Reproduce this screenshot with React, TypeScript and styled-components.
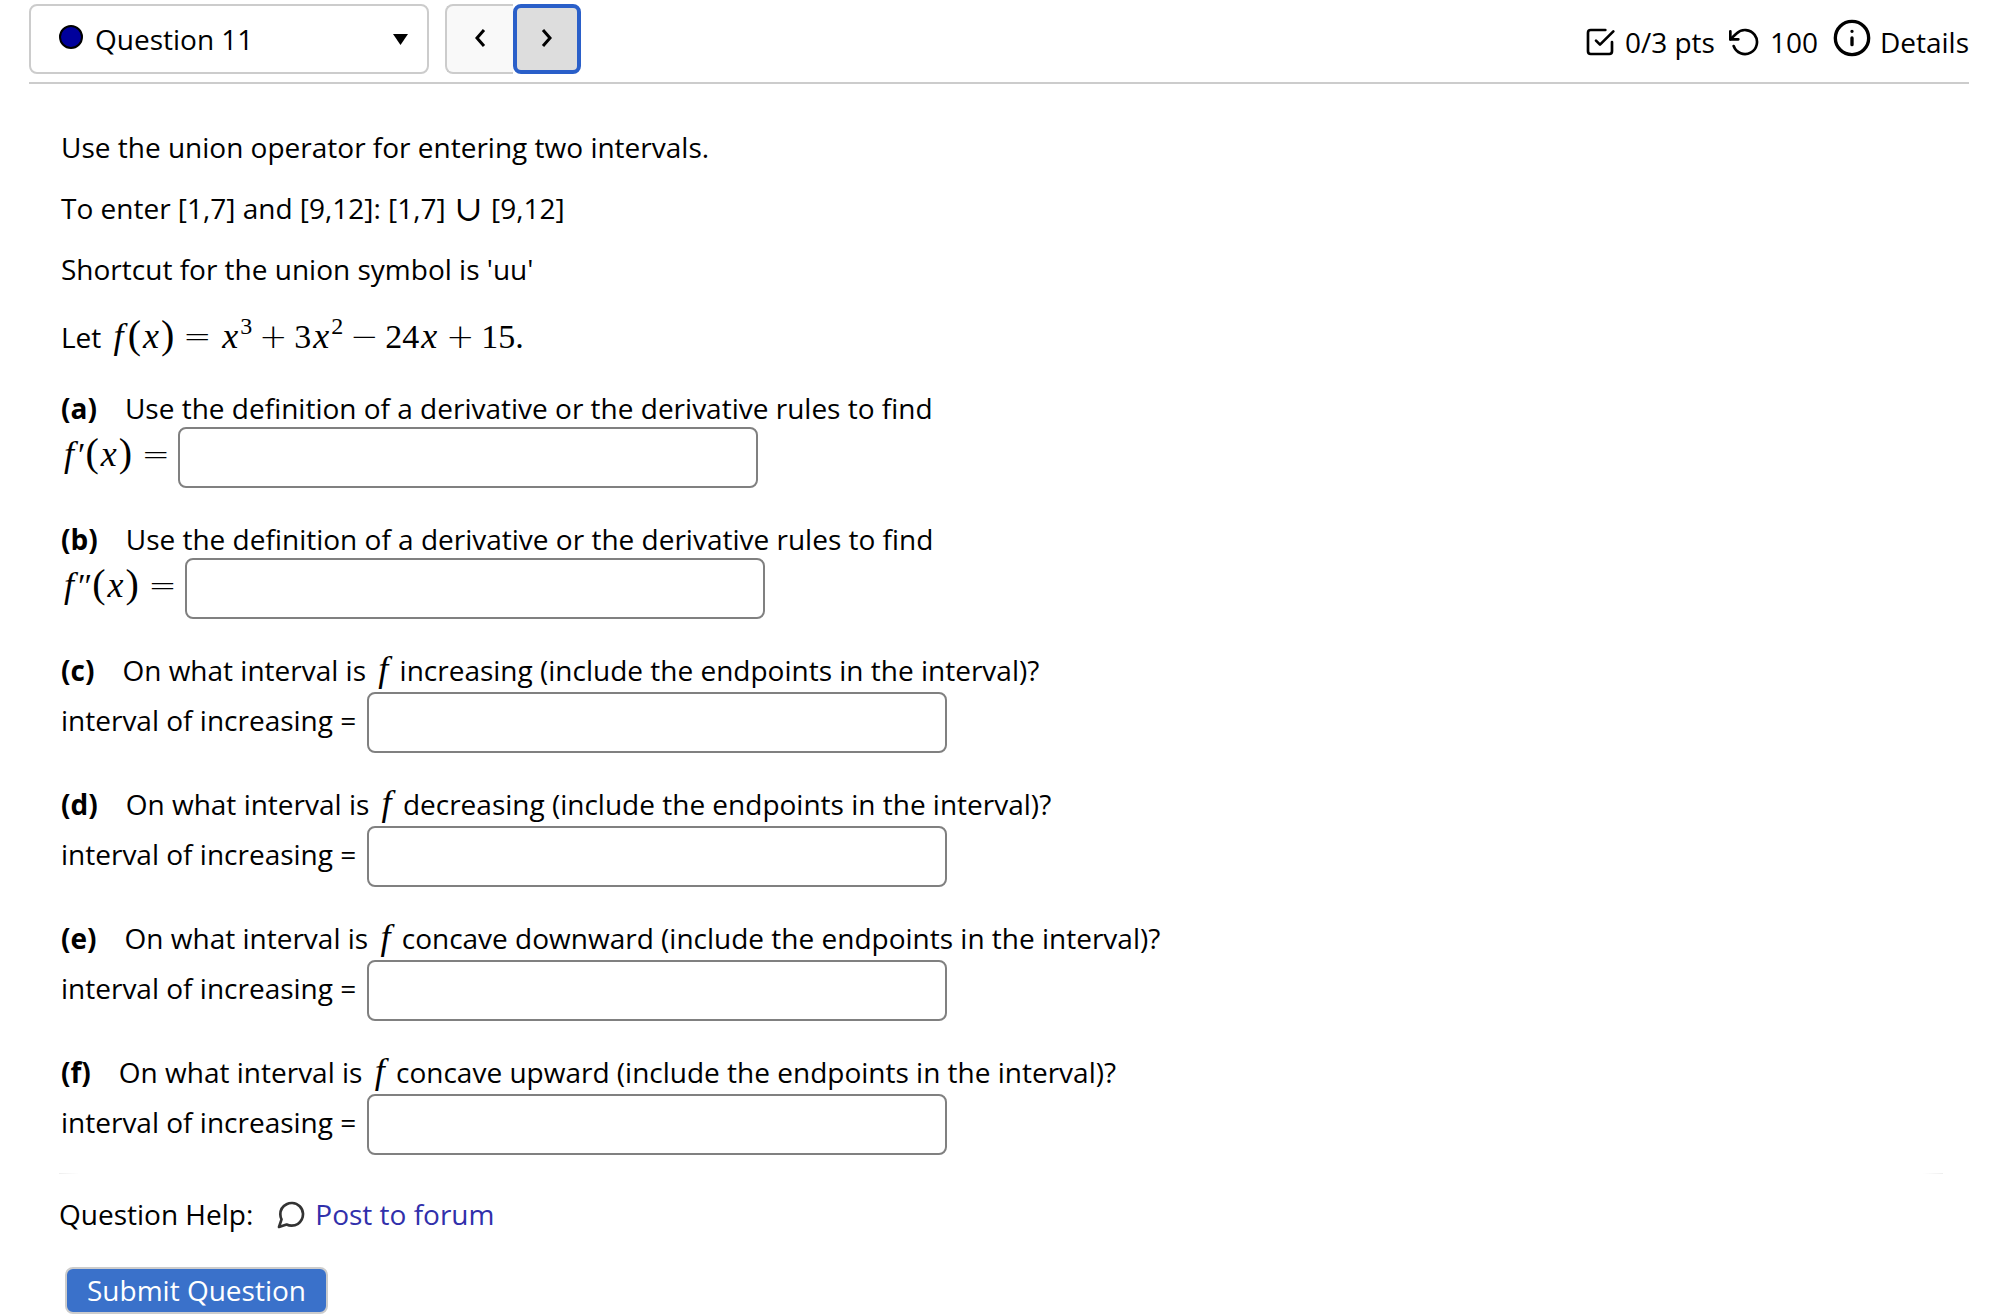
import React from 'react';
import styled, { createGlobalStyle } from 'styled-components';

const GlobalStyle = createGlobalStyle`
  *, *::before, *::after { box-sizing: border-box; }
  body {
    margin: 0;
    background: #fff;
    color: #000;
    font: 28px/33px "Open Sans", "Noto Sans", sans-serif;
  }
  button, input, select { font: inherit; color: inherit; }
`;

const Page = styled.div`
  padding: 4px 21px 0 29px;
`;

const Header = styled.header`
  display: flex;
  align-items: flex-end;
  justify-content: space-between;
  padding-bottom: 8px;
  border-bottom: 2px solid #ccc;
`;

const Navigation = styled.nav`
  display: flex;
  align-items: stretch;
  height: 70px;
`;

const QuestionPicker = styled.div`
  display: flex;
  align-items: center;
  gap: 12px;
  width: 400px;
  margin-right: 16px;
  padding: 0 19px 0 28px;
  border: 2px solid #ccc;
  border-radius: 8px;
`;

const Dot = styled.svg`
  margin-bottom: 4px;
`;

const QuestionSelect = styled.select`
  flex: 1;
  min-width: 0;
  height: 40px;
  padding: 0;
  border: 0;
  background: none;
  appearance: none;
  outline: none;
`;

const StepButton = styled.button<{ $current?: boolean }>`
  display: flex;
  align-items: center;
  justify-content: center;
  width: 68px;
  padding: 0;
  border: ${p => (p.$current ? '4px solid #2a5fc9' : '2px solid #ccc')};
  border-right-width: ${p => (p.$current ? '4px' : '0')};
  border-radius: ${p => (p.$current ? '8px' : '8px 0 0 8px')};
  background: ${p => (p.$current ? '#ddd' : '#f9f9f9')};
`;

const Status = styled.div`
  display: flex;
  align-items: center;
  gap: 14px;
  padding-bottom: 8px;
`;

const StatusItem = styled.span`
  display: flex;
  align-items: center;
  gap: 9px;
`;

const DetailsButton = styled.button`
  display: flex;
  align-items: center;
  gap: 8px;
  padding: 0;
  border: 0;
  background: none;
`;

const InfoIcon = styled.svg`
  margin-bottom: 8px;
`;

const Question = styled.main`
  padding: 47px 32px 0;
`;

const Line = styled.p<{ $height?: number }>`
  margin: 0 0 28px;
  line-height: ${p => p.$height ?? 33}px;
`;

const Parts = styled.div`
  display: flex;
  flex-direction: column;
  gap: 35px;
  margin-top: 32px;
`;

const Prompt = styled.div<{ $tall?: boolean }>`
  min-height: ${p => (p.$tall ? 36 : 33)}px;
  margin-bottom: 2px;
`;

const PartName = styled.b`
  margin-right: 28px;
`;

const AnswerRow = styled.div`
  display: flex;
  align-items: center;
  gap: 8px;
`;

const AnswerLabel = styled.label<{ $words?: boolean }>`
  padding: 0 ${p => (p.$words ? 3 : 0)}px 4px 0;
  white-space: nowrap;
`;

const AnswerInput = styled.input`
  width: 580px;
  height: 61px;
  padding: 0 12px;
  border: 2px solid #808080;
  border-radius: 8px;
  background: #fff;
`;

const MathText = styled.span<{ $inline?: boolean }>`
  margin-left: ${p => (p.$inline ? 2 : 0)}px;
  font-family: "Liberation Serif", "Times New Roman", serif;
  font-size: 34px;
  line-height: 0;
  white-space: nowrap;
`;

const Fn = styled.i`
  margin: 0 4px 0 3px;
  font-size: 36px;
`;

const Var = styled.i`
  margin: 0 2px;
  font-size: 36px;
`;

const Paren = styled.span`
  font-size: 40px;
`;

const Operator = styled.span`
  display: inline-block;
  width: 42px;
  font-family: "DejaVu Sans", sans-serif;
  font-weight: 200;
  text-align: center;
`;

const Relation = styled(Operator)<{ $last?: boolean }>`
  width: ${p => (p.$last ? 38 : 46)}px;
  text-align: ${p => (p.$last ? 'right' : 'center')};
`;

const Power = styled.sup`
  font-size: 24px;
  line-height: 0;
  vertical-align: 14px;
`;

const Union = styled.span`
  margin: 0 2px;
  font-family: "DejaVu Math TeX Gyre", "DejaVu Sans", sans-serif;
  font-size: 34px;
  line-height: 0;
`;

const Divider = styled.hr`
  height: 1px;
  margin: 18px 26px 0 30px;
  border: 0;
  background: linear-gradient(to right, #eee, #fff 20px, #fff calc(100% - 20px), #eee);
`;

const Footer = styled.footer`
  padding: 24px 30px 0;
`;

const Help = styled.div`
  display: flex;
  align-items: center;
  gap: 22px;
  margin-bottom: 36px;
`;

const ForumLink = styled.a`
  display: flex;
  align-items: center;
  gap: 8px;
  color: #3130ab;
  text-decoration: none;
`;

const SubmitButton = styled.button`
  height: 47px;
  margin-left: 6px;
  padding: 0 20px;
  border: 2px solid #ccc;
  border-radius: 8px;
  background: #3a71ca;
  color: #fff;
  line-height: 33px;
`;

const stroke = {
  fill: 'none',
  stroke: 'currentColor',
  strokeWidth: 2,
  strokeLinecap: 'round',
  strokeLinejoin: 'round',
} as const;

const OfX = () => (
  <>
    <Paren>(</Paren>
    <Var>x</Var>
    <Paren>)</Paren>
  </>
);

const F = () => (
  <MathText $inline>
    <Fn>f</Fn>
  </MathText>
);

const derivative = (prime: string) => (
  <MathText>
    <Fn>f</Fn>
    {prime}
    <OfX />
    <Relation $last>=</Relation>
  </MathText>
);

const rules = 'Use the definition of a derivative or the derivative rules to find';

const intervalPrompt = (kind: string) => (
  <>
    On what interval is <F /> {kind} (include the endpoints in the interval)?
  </>
);

const intervalLabel = 'interval of increasing =';

const parts = [
  { id: 'a', prompt: rules, label: derivative('′') },
  { id: 'b', prompt: rules, label: derivative('″') },
  { id: 'c', words: true, prompt: intervalPrompt('increasing'), label: intervalLabel },
  { id: 'd', words: true, prompt: intervalPrompt('decreasing'), label: intervalLabel },
  { id: 'e', words: true, prompt: intervalPrompt('concave downward'), label: intervalLabel },
  { id: 'f', words: true, prompt: intervalPrompt('concave upward'), label: intervalLabel },
];

export default function App() {
  return (
    <>
      <GlobalStyle />
      <Page>
        <Header>
          <Navigation>
            <QuestionPicker>
              <Dot width="24" height="24" viewBox="0 0 24 24" aria-hidden="true">
                <circle cx="12" cy="12" r="11" fill="#00009c" stroke="#000" strokeWidth="2" />
              </Dot>
              <QuestionSelect aria-label="Question">
                <option>Question 11</option>
              </QuestionSelect>
              <svg width="15" height="11" viewBox="0 0 15 11" aria-hidden="true">
                <path d="M0 0h15L7.500 11z" />
              </svg>
            </QuestionPicker>
            <StepButton aria-label="Previous question">
              <svg width="12" height="20" viewBox="0 0 12 20" aria-hidden="true">
                <path d="M10 1 3 9l7 8" {...stroke} strokeWidth={3} strokeLinecap="butt" strokeLinejoin="miter" />
              </svg>
            </StepButton>
            <StepButton $current aria-label="Next question">
              <svg width="12" height="20" viewBox="0 0 12 20" aria-hidden="true">
                <path d="m2 1 7 8-7 8" {...stroke} strokeWidth={3} strokeLinecap="butt" strokeLinejoin="miter" />
              </svg>
            </StepButton>
          </Navigation>
          <Status>
            <StatusItem>
              <svg width="32" height="32" viewBox="0 0 24 24" aria-hidden="true" {...stroke}>
                <path d="m9 11 3 3L22 4" />
                <path d="M21 12v7a2 2 0 0 1-2 2H5a2 2 0 0 1-2-2V5a2 2 0 0 1 2-2h11" />
              </svg>
              0/3 pts
            </StatusItem>
            <StatusItem>
              <svg width="32" height="32" viewBox="0 0 24 24" aria-hidden="true" {...stroke}>
                <path d="M1 4v6h6" />
                <path d="M3.51 15a9 9 0 1 0 2.13-9.36L1 10" />
              </svg>
              100
            </StatusItem>
            <DetailsButton>
              <InfoIcon width="40" height="40" viewBox="0 0 24 24" aria-hidden="true" {...stroke}>
                <circle cx="12" cy="12" r="10" />
                <path d="M12 16v-4M12 8h.01" />
              </InfoIcon>
              Details
            </DetailsButton>
          </Status>
        </Header>

        <Question>
          <Line>Use the union operator for entering two intervals.</Line>
          <Line>
            To enter [1,7] and [9,12]: [1,7] <Union>∪</Union> [9,12]
          </Line>
          <Line>Shortcut for the union symbol is 'uu'</Line>
          <Line $height={46}>
            Let{' '}
            <MathText $inline>
              <Fn>f</Fn>
              <OfX />
              <Relation>=</Relation>
              <Var>x</Var>
              <Power>3</Power>
              <Operator>+</Operator>3<Var>x</Var>
              <Power>2</Power>
              <Operator>−</Operator>24<Var>x</Var>
              <Operator>+</Operator>15.
            </MathText>
          </Line>
          <Parts>
            {parts.map(part => (
              <section key={part.id}>
                <Prompt $tall={part.words}>
                  <PartName>({part.id})</PartName>
                  {part.prompt}
                </Prompt>
                <AnswerRow>
                  <AnswerLabel htmlFor={`answer-${part.id}`} $words={part.words}>
                    {part.label}
                  </AnswerLabel>
                  <AnswerInput id={`answer-${part.id}`} type="text" autoComplete="off" />
                </AnswerRow>
              </section>
            ))}
          </Parts>
        </Question>

        <Divider />
        <Footer>
          <Help>
            Question Help:
            <ForumLink href="#forum">
              <svg width="32" height="32" viewBox="0 0 24 24" aria-hidden="true" {...stroke} stroke="#333">
                <path d="M21 11.5a8.38 8.38 0 0 1-.9 3.8 8.5 8.5 0 0 1-7.6 4.7 8.38 8.38 0 0 1-3.8-.9L3 21l1.9-5.7a8.38 8.38 0 0 1-.9-3.8 8.5 8.5 0 0 1 4.7-7.6 8.38 8.38 0 0 1 3.8-.9h.5a8.48 8.48 0 0 1 8 8v.5z" />
              </svg>
              Post to forum
            </ForumLink>
          </Help>
          <SubmitButton type="button">Submit Question</SubmitButton>
        </Footer>
      </Page>
    </>
  );
}
